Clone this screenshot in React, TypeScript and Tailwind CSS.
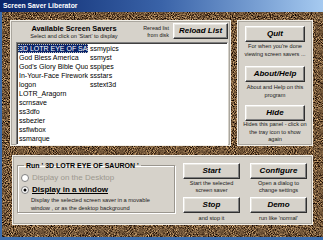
import React from "react";

const PANEL =
  "bg-[#d6d2ca] border border-[#f2efe8] shadow-[inset_0_0_0_1px_#aaa69e]";
const BTN =
  "flex items-center justify-center bg-[#d6d2ca] border border-t-white border-l-white border-r-[#303030] border-b-[#303030] shadow-[inset_-1px_-1px_0_#808080,inset_1px_1px_0_#e8e6e0] font-bold italic text-[8px] text-black";

function Radio({ checked }: { checked?: boolean }) {
  return (
    <svg width="8" height="8" viewBox="0 0 8 8" className="shrink-0">
      <circle cx="4" cy="4" r="3.5" fill="#fff" stroke="#808080" strokeWidth="1" />
      {checked && <circle cx="4" cy="4" r="1.5" fill="#000" />}
    </svg>
  );
}

export default function App() {
  const col1 = [
    "3D LOTR EYE OF SAURON",
    "God Bless America",
    "God's Glory Bible Quotes",
    "In-Your-Face Fireworks",
    "logon",
    "LOTR_Aragorn",
    "scrnsave",
    "ss3dfo",
    "ssbezier",
    "ssflwbox",
    "ssmarque",
  ];
  const col2 = ["ssmypics", "ssmyst", "sspipes", "ssstars", "sstext3d"];

  return (
    <div className="w-[323px] h-[240px] overflow-hidden flex flex-col bg-[#3c6eb0] font-['Liberation_Sans',Arial,sans-serif] text-black">
      {/* title bar */}
      <div className="h-[12px] shrink-0 bg-linear-to-r from-[#0a246a] via-[#3a63a8] to-[#a6caf0] pl-[3px] text-white font-bold text-[6.8px] leading-[11px]">
        Screen Saver Liberator
      </div>
      <div className="flex-1 flex pl-[2px] pb-[3px] min-h-0">
        <div className="relative flex-1 overflow-hidden">
          <svg className="absolute inset-0 w-full h-full" aria-hidden="true">
            <defs>
              <filter id="cork" x="0" y="0" width="100%" height="100%" colorInterpolationFilters="sRGB">
                <feTurbulence type="fractalNoise" baseFrequency="0.95" numOctaves="2" seed="7" />
                <feColorMatrix
                  type="matrix"
                  values="1.55 0 0 0 -0.33  1.35 0 0 0 -0.34  1.0 0 0 0 -0.28  0 0 0 0 1"
                />
              </filter>
            </defs>
            <rect width="100%" height="100%" fill="#6a4f35" />
            <rect width="100%" height="100%" filter="url(#cork)" />
          </svg>

          <div className="relative flex flex-col pt-[8px] pl-[8px]">
            {/* top row */}
            <div className="flex gap-[6px] h-[126px]">
              {/* left panel */}
              <div className={`${PANEL} w-[221px] flex flex-col`}>
                <div className="flex h-[21px] items-start">
                  <div className="w-[112px] ml-[7px] flex flex-col items-center pt-[3px]">
                    <div className="font-bold text-[7.4px] leading-[9px]">Available Screen Savers</div>
                    <div className="text-[5.6px] leading-[7px] text-[#202020]">
                      Select and click on 'Start' to display
                    </div>
                  </div>
                  <div className="w-[32px] ml-[7px] pt-[4px] text-[5.4px] leading-[7px] text-right text-[#202020]">
                    <div>Reread list</div>
                    <div>from disk</div>
                  </div>
                  <div className={`${BTN} ml-[4px] mt-[2px] w-[55px] h-[16px]`}>Reload List</div>
                </div>
                <div className="ml-[5px] mr-[2px] flex-1 bg-white border border-t-[#808080] border-l-[#808080] border-r-white border-b-white shadow-[inset_1px_1px_0_#404040] pt-[1px] pl-[1px] flex text-[7px] leading-[9px]">
                  <div className="w-[71px] flex flex-col">
                    {col1.map((t, i) => (
                      <div
                        key={t}
                        className={`h-[9px] w-[70px] overflow-hidden whitespace-nowrap pl-[1px] ${
                          i === 0 ? "bg-[#0a246a] text-white outline outline-dotted outline-[#c0c0c0] -outline-offset-1" : ""
                        }`}
                      >
                        {t}
                      </div>
                    ))}
                  </div>
                  <div className="flex flex-col">
                    {col2.map((t) => (
                      <div key={t} className="h-[9px] whitespace-nowrap pl-[1px]">
                        {t}
                      </div>
                    ))}
                  </div>
                </div>
              </div>

              {/* right panel */}
              <div className={`${PANEL} w-[76px] flex flex-col items-center text-center`}>
                <div className={`${BTN} mt-[5px] w-[60px] h-[16px]`}>Quit</div>
                <div className="mt-[1px] text-[5.6px] leading-[7.5px] text-[#202020]">
                  For when you're done
                  <br />
                  viewing screen savers ...
                </div>
                <div className={`${BTN} mt-[8px] w-[60px] h-[16px]`}>About/Help</div>
                <div className="mt-[2px] text-[5.6px] leading-[7.5px] text-[#202020]">
                  About and Help on this
                  <br />
                  program
                </div>
                <div className={`${BTN} mt-[6px] w-[60px] h-[16px]`}>Hide</div>
                <div className="mt-[0px] text-[5.6px] leading-[7.5px] text-[#202020]">
                  Hides this panel - click on
                  <br />
                  the tray icon to show
                  <br />
                  again
                </div>
              </div>
            </div>

            {/* bottom panel */}
            <div className={`${PANEL} mt-[9px] ml-[2px] w-[301px] h-[70px] flex`}>
              <fieldset className="ml-[4px] mt-[5px] w-[158px] h-[52px] border border-[#9a968e] shadow-[inset_1px_1px_0_#fff,1px_1px_0_#fff] px-[3px]">
                <legend className="ml-[3px] px-[2px] font-bold text-[7px] leading-[9px]">
                  Run ' 3D LOTR EYE OF SAURON '
                </legend>
                <div className="pt-[2px] flex items-center gap-[3px] h-[13px] text-[8px] text-[#9c988f]">
                  <Radio />
                  <span>Display on the Desktop</span>
                </div>
                <div className="flex items-center gap-[3px] h-[13px] text-[8px] font-bold underline">
                  <Radio checked />
                  <span>Display in a window</span>
                </div>
                <div className="ml-[10px] text-[5.7px] leading-[8px] text-[#202020]">
                  Display the selected screen saver in a movable
                  <br />
                  window , or as the desktop background
                </div>
              </fieldset>

              <div className="ml-[6px] w-[61px] flex flex-col items-center text-center pt-[7px]">
                <div className={`${BTN} w-[57px] h-[16px]`}>Start</div>
                <div className="mt-[1px] text-[5.6px] leading-[7px] text-[#202020]">
                  Start the selected
                  <br />
                  screen saver
                </div>
                <div className={`${BTN} mt-[3px] w-[57px] h-[16px]`}>Stop</div>
                <div className="mt-[2px] text-[5.6px] leading-[7px] text-[#202020]">and stop it</div>
              </div>
              <div className="ml-[6px] w-[61px] flex flex-col items-center text-center pt-[7px]">
                <div className={`${BTN} w-[57px] h-[16px]`}>Configure</div>
                <div className="mt-[1px] text-[5.6px] leading-[7px] text-[#202020]">
                  Open a dialog to
                  <br />
                  change settings
                </div>
                <div className={`${BTN} mt-[3px] w-[57px] h-[16px]`}>Demo</div>
                <div className="mt-[2px] text-[5.6px] leading-[7px] text-[#202020]">run like 'normal'</div>
              </div>
            </div>
          </div>
        </div>
      </div>
    </div>
  );
}
